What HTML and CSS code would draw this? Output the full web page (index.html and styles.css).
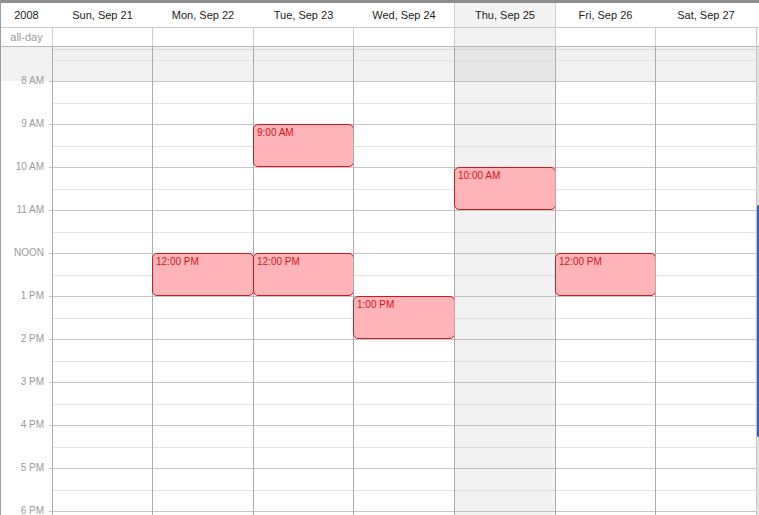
FILE: index.html
```html
<!DOCTYPE html>
<html>
<head>
<meta charset="utf-8">
<link rel="stylesheet" href="styles.css">
</head>
<body>
<div class="cal">
  <div class="row head">
    <div class="hcell corner">2008</div>
    <div class="hcell">Sun, Sep 21</div>
    <div class="hcell">Mon, Sep 22</div>
    <div class="hcell">Tue, Sep 23</div>
    <div class="hcell">Wed, Sep 24</div>
    <div class="hcell today">Thu, Sep 25</div>
    <div class="hcell after">Fri, Sep 26</div>
    <div class="hcell">Sat, Sep 27</div>
    <div class="hcell sc"></div>
  </div>
  <div class="row allday">
    <div class="acell label">all-day</div>
    <div class="acell"></div>
    <div class="acell"></div>
    <div class="acell"></div>
    <div class="acell"></div>
    <div class="acell today"></div>
    <div class="acell"></div>
    <div class="acell"></div>
    <div class="acell sc"></div>
  </div>
  <div class="row body">
    <div class="times">
      <div class="tl">8 AM</div>
      <div class="tl">9 AM</div>
      <div class="tl">10 AM</div>
      <div class="tl">11 AM</div>
      <div class="tl">NOON</div>
      <div class="tl">1 PM</div>
      <div class="tl">2 PM</div>
      <div class="tl">3 PM</div>
      <div class="tl">4 PM</div>
      <div class="tl">5 PM</div>
      <div class="tl">6 PM</div>
    </div>
    <div class="day"></div>
    <div class="day">
      <div class="ev" style="top:206px">12:00 PM</div>
    </div>
    <div class="day">
      <div class="ev" style="top:77px">9:00 AM</div>
      <div class="ev" style="top:206px">12:00 PM</div>
    </div>
    <div class="day">
      <div class="ev" style="top:249px">1:00 PM</div>
    </div>
    <div class="day today">
      <div class="ev" style="top:120px">10:00 AM</div>
    </div>
    <div class="day">
      <div class="ev" style="top:206px">12:00 PM</div>
    </div>
    <div class="day"></div>
    <div class="scroll"><div class="thumb"></div></div>
  </div>
</div>
</body>
</html>
```
FILE: styles.css
```css
html, body {
  margin: 0;
  padding: 0;
  background: #fff;
}
.cal {
  width: 758px;
  height: 512px;
  overflow: hidden;
  border-top: 3px solid #8e8e8e;
  border-left: 1px solid #9c9c9c;
  font-family: "Liberation Sans", Arial, sans-serif;
}
.row {
  display: grid;
  grid-template-columns: 51px 100px 101px 100px 101px 101px 100px 101px 3px;
}
.head {
  height: 24px;
  border-bottom: 1px solid #c9c9c9;
}
.hcell {
  font-size: 11px;
  line-height: 24px;
  text-align: center;
  color: #1b1b1b;
  border-left: 1px solid transparent;
  white-space: nowrap;
}
.hcell.corner {
  border-left: 0;
}
.hcell.today {
  background: #f3f3f3;
  border-left-color: #cfcfcf;
}
.hcell.after {
  border-left-color: #cfcfcf;
}
.allday {
  height: 18px;
  border-bottom: 1px solid #b9b9b9;
}
.acell {
  border-left: 1px solid #cdcdcd;
}
.acell.label {
  border-left: 0;
  font-size: 11px;
  line-height: 18px;
  color: #9a9a9a;
  text-align: center;
}
.acell.today {
  background: #f2f2f2;
}
.acell.sc {
  border-left: 1px solid #c8c8c8;
  background: #f4f4f4;
}
.body {
  height: 468px;
}
.times {
  padding-top: 28px;
  background:
    linear-gradient(#c2c2c2 0 1px, transparent 1px) right 34px / 3px 43px repeat-y,
    linear-gradient(#f1f1f1, #f1f1f1) 0 0 / 100% 34px no-repeat;
}
.tl {
  height: 43px;
  line-height: 12px;
  font-size: 10px;
  color: #9a9a9a;
  text-align: right;
  padding-right: 8px;
}
.day {
  position: relative;
  border-left: 1px solid #ababab;
  background:
    linear-gradient(#d8d8d8 0 1px, transparent 1px) 0 2px / 100% 3px no-repeat,
    linear-gradient(to bottom, #c6c6c6 0 1px, transparent 1px 22px, #e3e3e3 22px 23px, transparent 23px) 0 34px / 100% 43px repeat-y,
    linear-gradient(#f1f1f1, #f1f1f1) 0 0 / 100% 34px no-repeat;
}
.day.today {
  background:
    linear-gradient(#d0d0d0 0 1px, transparent 1px) 0 2px / 100% 3px no-repeat,
    linear-gradient(to bottom, #c2c2c2 0 1px, transparent 1px 22px, #dcdcdc 22px 23px, transparent 23px) 0 34px / 100% 43px repeat-y,
    linear-gradient(#e6e6e6, #e6e6e6) 0 0 / 100% 34px no-repeat,
    #f2f2f2;
}
.ev {
  position: absolute;
  left: -1px;
  right: -1px;
  height: 43px;
  box-sizing: border-box;
  border: 1px solid #d2161e;
  border-radius: 5px;
  background: #ffb4b7;
  color: #d2141a;
  font-size: 10px;
  line-height: 12px;
  padding: 2px 3px;
  white-space: nowrap;
}
.scroll {
  border-left: 1px solid #c4c4c4;
  background: #e2e2e2;
}
.thumb {
  margin-top: 158px;
  height: 232px;
  box-sizing: border-box;
  border: 2px solid #2f5fd2;
  border-right: 0;
  border-radius: 4px 0 0 4px;
  background: #eef3fc;
}
```
